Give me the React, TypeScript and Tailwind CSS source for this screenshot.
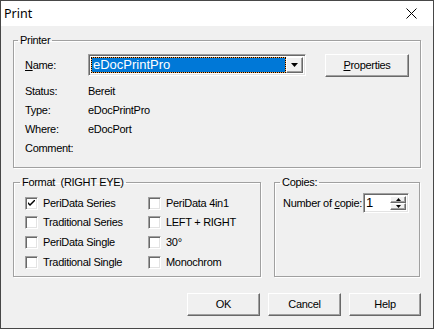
import React from "react";

const sunken =
  "border border-t-[#a0a0a0] border-l-[#a0a0a0] border-r-white border-b-white shadow-[inset_1px_1px_0_#696969,inset_-1px_-1px_0_#e3e3e3]";
const raised =
  "border border-t-white border-l-white border-r-[#696969] border-b-[#696969] shadow-[inset_-1px_-1px_0_#a0a0a0]";

function Check({ checked, label }: { checked?: boolean; label: string }) {
  return (
    <div className="flex items-center">
      <div className={`w-[13px] h-[13px] bg-white ${sunken} flex items-center justify-center`}>
        {checked && (
          <svg width="7" height="7" viewBox="0 0 7 7">
            <path d="M0 2 L0 4 L2 6 L7 1 L7 -1 L2 4 Z" fill="#000" />
          </svg>
        )}
      </div>
      <span className="ml-[5px]">{label}</span>
    </div>
  );
}

function Btn({ children, w }: { children: React.ReactNode; w: string }) {
  return (
    <div className={`${w} h-[23px] bg-[#f0f0f0] ${raised} flex items-center justify-center`}>
      {children}
    </div>
  );
}

export default function App() {
  return (
    <div
      className="w-[434px] h-[329px] bg-[#f0f0f0] border border-[#474747] flex flex-col text-[11px] leading-[13px] tracking-[-0.3px] text-black"
      style={{ fontFamily: '"Liberation Sans", Arial, sans-serif' }}
    >
      {/* title bar */}
      <div className="h-[25px] bg-white flex items-center justify-between pl-[3px] pr-[16px] shrink-0">
        <span className="text-[12.5px] tracking-normal" style={{ fontFamily: '"Noto Sans", "Open Sans", sans-serif' }}>
          Print
        </span>
        <svg width="11" height="11" viewBox="0 0 11 11">
          <path d="M0.5 0.5 L10.5 10.5 M10.5 0.5 L0.5 10.5" stroke="#000" strokeWidth="1" />
        </svg>
      </div>

      {/* body */}
      <div className="flex flex-col pl-[12px]">
        {/* Printer group */}
        <fieldset className="mt-[8px] w-[407px] h-[134px] border border-[#a0a0a0] shadow-[inset_1px_1px_0_#fff,1px_1px_0_#fff] px-[11px] pt-[7px]">
          <legend className="-ml-[7px] px-[2px]">Printer</legend>
          <div className="flex items-center h-[22px]">
            <span className="w-[63px]">
              <span className="underline">N</span>ame:
            </span>
            <div className={`w-[218px] h-[22px] bg-white ${sunken} flex items-center p-[2px]`}>
              <div className="flex-1 h-full bg-[#f5a04a]">
                <div className="h-full border border-dotted border-black bg-[#0078d7] bg-clip-padding text-white text-[13px] leading-[14px] tracking-normal flex items-center pl-[1px]">
                  eDocPrintPro
                </div>
              </div>
              <div className={`w-[17px] h-full bg-[#f0f0f0] ${raised} flex items-center justify-center`}>
                <svg width="7" height="4" viewBox="0 0 7 4">
                  <path d="M0 0 H7 L3.5 4 Z" fill="#000" />
                </svg>
              </div>
            </div>
            <div className="ml-[19px]">
              <Btn w="w-[84px]">
                <span>
                  <span className="underline">P</span>roperties
                </span>
              </Btn>
            </div>
          </div>
          <div className="mt-[6px] flex flex-col">
            {[
              ["Status:", "Bereit"],
              ["Type:", "eDocPrintPro"],
              ["Where:", "eDocPort"],
              ["Comment:", ""],
            ].map(([k, v]) => (
              <div key={k} className="h-[19px] flex items-center">
                <span className="w-[63px]">{k}</span>
                <span>{v}</span>
              </div>
            ))}
          </div>
        </fieldset>

        <div className="flex mt-[8px]">
          {/* Format group */}
          <fieldset className="w-[248px] h-[101px] border border-[#a0a0a0] shadow-[inset_1px_1px_0_#fff,1px_1px_0_#fff] pl-[11px] pt-[4px]">
            <legend className="-ml-[5px] px-[2px]">Format&nbsp;&nbsp;(RIGHT EYE)</legend>
            <div className="grid grid-cols-[123px_1fr] grid-rows-[20px_19px_20px_20px] items-center">
              <Check checked label="PeriData Series" />
              <Check label="PeriData 4in1" />
              <Check label="Traditional Series" />
              <Check label="LEFT + RIGHT" />
              <Check label="PeriData Single" />
              <Check label="30°" />
              <Check label="Traditional Single" />
              <Check label="Monochrom" />
            </div>
          </fieldset>

          {/* Copies group */}
          <fieldset className="ml-[13px] w-[146px] h-[101px] border border-[#a0a0a0] shadow-[inset_1px_1px_0_#fff,1px_1px_0_#fff] pl-[8px] pt-[4px]">
            <legend className="-ml-[3px] px-[2px]">Copies:</legend>
            <div className="flex items-center h-[20px]">
              <span className="w-[80px] whitespace-nowrap">
                Number of <span className="underline">c</span>opie:
              </span>
              <div className={`w-[46px] h-[20px] bg-white ${sunken} flex items-stretch p-[2px]`}>
                <span className="flex-1 text-[13px] leading-[14px] tracking-normal">1</span>
                <div className="w-[16px] flex flex-col">
                  <div className={`flex-1 bg-[#f0f0f0] ${raised} flex items-center justify-center`}>
                    <svg width="5" height="3" viewBox="0 0 5 3">
                      <path d="M2.5 0 L5 3 H0 Z" fill="#000" />
                    </svg>
                  </div>
                  <div className={`flex-1 bg-[#f0f0f0] ${raised} flex items-center justify-center`}>
                    <svg width="5" height="3" viewBox="0 0 5 3">
                      <path d="M0 0 H5 L2.5 3 Z" fill="#000" />
                    </svg>
                  </div>
                </div>
              </div>
            </div>
          </fieldset>
        </div>

        {/* Buttons */}
        <div className="flex mt-[16px] pl-[174px] gap-[8px]">
          <Btn w="w-[73px]">OK</Btn>
          <Btn w="w-[73px]">Cancel</Btn>
          <Btn w="w-[72px]">Help</Btn>
        </div>
      </div>
    </div>
  );
}
